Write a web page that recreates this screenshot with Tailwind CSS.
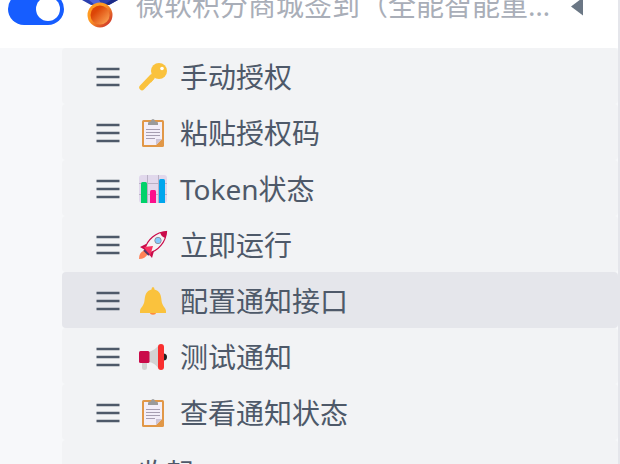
<!DOCTYPE html>
<html lang="zh-CN">
<head>
    <meta charset="UTF-8">
    <meta name="viewport" content="width=device-width, initial-scale=1.0">
    <title>微软积分商城签到</title>
    <script src="https://cdn.jsdelivr.net/npm/@tailwindcss/browser@4"></script>
</head>
<body class="h-screen overflow-hidden bg-[#f7f8fa] font-['Noto_Sans','Noto_Sans_CJK_SC',sans-serif] text-[28px] text-[#4e5969]">
    <!-- Shared icons -->
    <svg class="hidden">
        <symbol id="menu" viewBox="0 0 24 24">
            <path d="M0.500 4H23.500M0.500 12H23.500M0.500 20H23.500" stroke="#4e5969" stroke-width="2.400"/>
        </symbol>
        <symbol id="clipboard" viewBox="-1 -1 30 30">
            <rect x="3" y="1" width="22" height="27" rx="1.500" fill="#e19747"/>
            <path d="M5 3H23V20L17 26H5Z" fill="#f3eef8"/>
            <path d="M17 26V20H23Z" fill="#cdc4d6"/>
            <path d="M9 6V4Q9 2.500 11 2.500H12Q12 0 14 0T16 2.500H17Q19 2.500 19 4V6Z" fill="#9b9b9b"/>
            <path d="M7 10.500H21M7 13.500H21M7 16.500H21M7 19.500H16" stroke="#a79eb0" stroke-width="1"/>
        </symbol>
    </svg>

    <div class="min-h-screen border-r-2 border-[#e5e6eb]">
        <!-- Script header, partly scrolled out of view -->
        <header class="-mt-8 h-20 bg-white flex items-center pl-2 pr-[35px]">
            <input type="checkbox" role="switch" checked aria-label="启用脚本" class="appearance-none shrink-0 mt-0.5 w-14 h-8 rounded-full bg-[#165dff] before:block before:w-6 before:h-6 before:mt-1 before:ml-7 before:rounded-full before:bg-white">
            <svg class="shrink-0 ml-4 w-10 h-10" viewBox="0 0 40 40" aria-hidden="true">
                <defs>
                    <linearGradient id="ring" x1="0" y1="0" x2="1" y2="1">
                        <stop offset=".4" stop-color="#ff9a22"/>
                        <stop offset="1" stop-color="#c3202d"/>
                    </linearGradient>
                    <linearGradient id="coin" x1="0" y1="0" x2="1" y2="1">
                        <stop offset=".3" stop-color="#dc4507"/>
                        <stop offset="1" stop-color="#ffae5c"/>
                    </linearGradient>
                </defs>
                <path d="M2 0H38V12L29 17H11L2 12Z" fill="#2b3fae"/>
                <path d="M9 12H19L22 17H15Z" fill="#4f66dc"/>
                <path d="M38 12H31L24 17H29Z" fill="#1c2b86"/>
                <circle cx="20" cy="27" r="12.500" fill="url(#ring)"/>
                <circle cx="20" cy="27" r="9.500" fill="url(#coin)"/>
            </svg>
            <h1 class="flex-1 min-w-0 ml-4 pb-1.5 truncate text-[#a9aeb8]">微软积分商城签到（全能智能重构版）</h1>
            <button aria-label="收起" class="ml-4 shrink-0">
                <svg class="w-3 h-[18px]" viewBox="0 0 12 18"><path d="M0 7.500L12 -1.500V16.500Z" fill="#6b7785"/></svg>
            </button>
        </header>

        <!-- Menu commands -->
        <nav class="pl-[62px]">
            <button class="w-full h-14 pt-0.5 pl-[34px] flex items-center rounded bg-[#f2f3f5]">
                <svg class="w-6 h-6 mr-[18px]"><use href="#menu"/></svg>
                <svg class="w-[30px] h-[30px] mr-3" viewBox="-1 -1 30 30">
                    <path d="M13 14L3 24.500" stroke="#fac23d" stroke-width="5.500" stroke-linecap="round"/>
                    <path d="M16 15L12 19.500L10.500 19L8 23L5 22Z" fill="#fac23d"/>
                    <circle cx="20" cy="8" r="8" fill="#fac23d"/>
                    <circle cx="23" cy="5.500" r="1.800" fill="#fff"/>
                </svg>
                <span>手动授权</span>
            </button>
            <button class="w-full h-14 pt-0.5 pl-[34px] flex items-center rounded bg-[#f2f3f5]">
                <svg class="w-6 h-6 mr-[18px]"><use href="#menu"/></svg>
                <svg class="w-[30px] h-[30px] mr-3"><use href="#clipboard"/></svg>
                <span>粘贴授权码</span>
            </button>
            <button class="w-full h-14 pt-0.5 pl-[34px] flex items-center rounded bg-[#f2f3f5]">
                <svg class="w-6 h-6 mr-[18px]"><use href="#menu"/></svg>
                <svg class="w-[30px] h-[30px] mr-3" viewBox="-1 -1 30 30">
                    <rect width="28" height="28" rx="3" fill="#e1d8ec"/>
                    <path d="M8.500 0V28M19.500 0V28M0 8.500H28M0 19.500H28" stroke="#b8b0c4"/>
                    <path d="M2 28V8.500Q2 7 3.500 7H6.500Q8 7 8 8.500V28Z" fill="#00d26a"/>
                    <path d="M11 28V16.500Q11 15 12.500 15H15.500Q17 15 17 16.500V28Z" fill="#fc0f8c"/>
                    <path d="M20 28V5.500Q20 4 21.500 4H24.500Q26 4 26 5.500V28Z" fill="#00a6ed"/>
                </svg>
                <span>Token状态</span>
            </button>
            <button class="w-full h-14 pt-0.5 pl-[34px] flex items-center rounded bg-[#f2f3f5]">
                <svg class="w-6 h-6 mr-[18px]"><use href="#menu"/></svg>
                <svg class="w-[30px] h-[30px] mr-3" viewBox="-1 -1 30 30">
                    <path d="M7 19Q0 20 0 28Q7 28 9 22Z" fill="#ff8257"/>
                    <path d="M1 16L7 13L11 14L6 19ZM13 27L15 20L14 17L9 22Z" fill="#ca0b4a"/>
                    <path d="M6 18C8 9 17 1 27.500 0.500C27 11 19 20 10 22Z" fill="#f4f4f4" stroke="#ca0b4a" stroke-width="1.200"/>
                    <path d="M21 1.500L28 0L26.500 7Q22.500 6 21 1.500Z" fill="#ca0b4a"/>
                    <path d="M5 16L14 15L11 25Z" fill="#f8315f"/>
                    <path d="M5 19L10 24" stroke="#533566" stroke-width="2"/>
                    <circle cx="19" cy="9.500" r="3.200" fill="#83cbff" stroke="#9094a2"/>
                </svg>
                <span>立即运行</span>
            </button>
            <button class="w-full h-14 pt-0.5 pl-[34px] flex items-center rounded bg-[#e5e6eb]">
                <svg class="w-6 h-6 mr-[18px]"><use href="#menu"/></svg>
                <svg class="w-[30px] h-[30px] mr-3" viewBox="-1 -1 30 30">
                    <circle cx="14" cy="24.500" r="3.300" fill="#ff8b3d"/>
                    <path d="M14 0Q15.500 0 15.500 2.500C21 4 22 8 22.500 13.500C23 19 27 21 27 24V26H1V24C1 21 5 19 5.500 13.500C6 8 7 4 12.500 2.500Q12.500 0 14 0Z" fill="#fac23d"/>
                </svg>
                <span>配置通知接口</span>
            </button>
            <button class="w-full h-14 pt-0.5 pl-[34px] flex items-center rounded bg-[#f2f3f5]">
                <svg class="w-6 h-6 mr-[18px]"><use href="#menu"/></svg>
                <svg class="w-[30px] h-[30px] mr-3" viewBox="-1 -1 30 30">
                    <path d="M3 18H8V25Q8 27 5.500 27T3 25Z" fill="#d3d3d3"/>
                    <circle cx="24.500" cy="14" r="3.500" fill="#212121"/>
                    <path d="M10 9Q16 7 20 2V26Q16 20 10 19Z" fill="#d3d3d3"/>
                    <rect y="8" width="10.500" height="12" rx="1.500" fill="#ca0b4a"/>
                    <rect x="19" y="1" width="6" height="26" rx="3" fill="#f92f2f"/>
                </svg>
                <span>测试通知</span>
            </button>
            <button class="w-full h-14 pt-0.5 pl-[34px] flex items-center rounded bg-[#f2f3f5]">
                <svg class="w-6 h-6 mr-[18px]"><use href="#menu"/></svg>
                <svg class="w-[30px] h-[30px] mr-3"><use href="#clipboard"/></svg>
                <span>查看通知状态</span>
            </button>
            <button class="w-full h-16 pt-0.5 pl-[76px] flex items-center rounded bg-[#f2f3f5]">
                <span>收起</span>
            </button>
        </nav>
    </div>
</body>
</html>
